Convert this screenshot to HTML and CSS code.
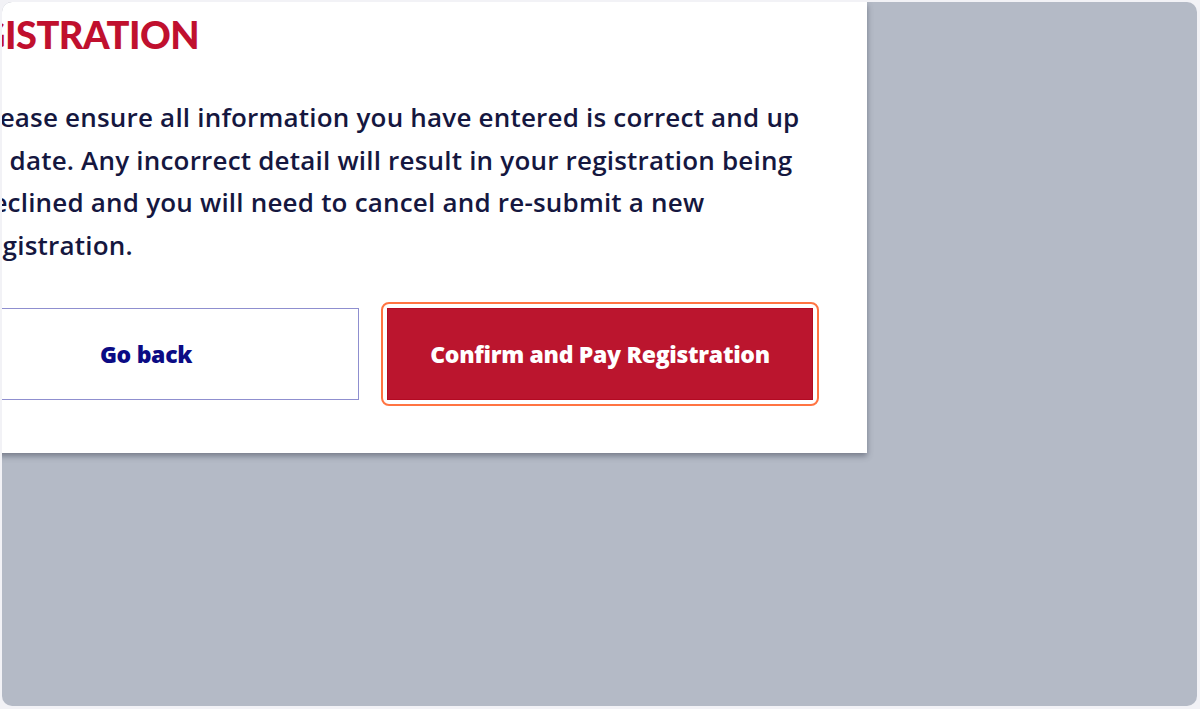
FILE: index.html
```html
<!DOCTYPE html>
<html lang="en">
<head>
<meta charset="utf-8">
<title>Confirm Registration</title>
<link rel="stylesheet" href="styles.css">
</head>
<body>
<div class="frame">
  <section class="card">
    <h1 class="title">REGISTRATION</h1>
    <p class="notice">Please ensure all information you have entered is correct and up to date. Any incorrect detail will result in your registration being declined and you will need to cancel and re-submit a new registration.</p>
    <div class="actions">
      <button class="btn btn-secondary" type="button">Go back</button>
      <div class="focus-ring">
        <button class="btn btn-primary" type="button">Confirm and Pay Registration</button>
      </div>
    </div>
  </section>
</div>
</body>
</html>
```

FILE: styles.css
```css
* { box-sizing: border-box; }
html, body { margin: 0; padding: 0; }
body {
  background: #f2f2f6;
  width: 1200px;
  height: 709px;
  overflow: hidden;
  font-family: "Open Sans", "Noto Sans", sans-serif;
}
.frame {
  margin: 2px 0 0 2px;
  width: 1195px;
  height: 704px;
  border-radius: 10px;
  background: #b4bac6;
  overflow: hidden;
}
.card {
  background: #ffffff;
  width: 988px;
  height: 451px;
  margin-left: -123px;
  padding: 8px 54px 0 54px;
  box-shadow: 0 3px 6px rgba(40, 46, 64, 0.45);
  display: flex;
  flex-direction: column;
}
.title {
  margin: 0;
  font-family: Lato, "Noto Sans", sans-serif;
  font-size: 38px;
  line-height: 48px;
  font-weight: 900;
  color: #c0102e;
  letter-spacing: -0.5px;
}
.notice {
  margin: 38px 0 0 0;
  padding-left: 43px;
  width: 878px;
  font-size: 26px;
  line-height: 42.5px;
  font-weight: 600;
  color: #15173f;
  letter-spacing: 0.2px;
}
.actions {
  margin-top: 42px;
  display: grid;
  grid-template-columns: 426px 426px;
  column-gap: 28px;
  align-items: center;
}
.btn {
  font-family: inherit;
  font-size: 23px;
  font-weight: 800;
  height: 92px;
  width: 100%;
  cursor: pointer;
  border-radius: 0;
  letter-spacing: -0.3px;
}
.btn-secondary {
  background: #ffffff;
  color: #0b0b84;
  border: 1px solid #8f8fcf;
}
.focus-ring {
  padding: 4px;
  border: 2px solid #ff7442;
  border-radius: 8px;
  margin: -6px;
}
.btn-primary {
  display: block;
  background: #bb152e;
  color: #ffffff;
  border: 1px solid #b30a22;
}
```
